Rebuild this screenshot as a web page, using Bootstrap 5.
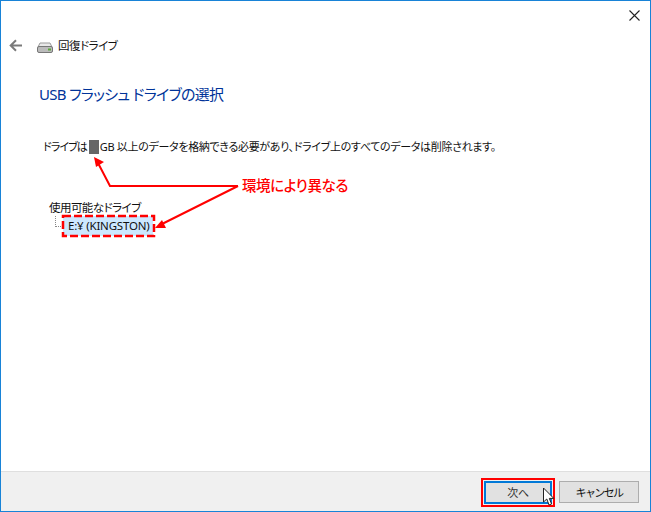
<!DOCTYPE html>
<html lang="ja">
<head>
<meta charset="utf-8">
<title>回復ドライブ</title>
<link href="https://cdn.jsdelivr.net/npm/bootstrap@5.3.0/dist/css/bootstrap.min.css" rel="stylesheet">
<style>
html,body{margin:0;height:512px;overflow:hidden;background:#fff}
body{font-family:"Noto Sans","Noto Sans CJK JP",sans-serif;font-size:12px;color:#111;line-height:16px;font-feature-settings:"palt"}
.win-frame{width:651px;height:512px;border:1px solid #1883d7;background:#fff;position:relative}
.close-row{height:29px;padding-right:10px}
.head-row{height:30px;padding-left:8px}
.back-ico{width:13px;height:13px;margin-right:15px}
.drive-ico{width:16px;height:11px;margin-top:5px;margin-right:5px}
.head-title{font-size:11.5px;letter-spacing:-.5px;padding-top:2px}
.page-title{font-size:15px;line-height:22px;color:#003399;margin:23px 0 0 38px;font-weight:400;letter-spacing:-.7px}
.desc-line{margin:34px 0 0 42px;font-size:11px;letter-spacing:-.32px;line-height:16px;white-space:nowrap}
.desc-lead{letter-spacing:-.95px}
.redact{display:inline-block;width:10px;height:14px;background:#666;vertical-align:top;margin:1px 1px 0 2px}
.tree-label{margin:45px 0 0 48px;font-size:11.5px;letter-spacing:-.55px;line-height:15px}
.tree-row{margin-left:54px;height:20px;margin-top:1px}
.tree-dots{width:8px;height:11px;border-left:1px dotted #888;border-bottom:1px dotted #888}
.drive-item{width:90px;height:20px;background:#cce8ff;padding-left:5px;line-height:19px;font-size:11.5px;letter-spacing:-.2px;white-space:nowrap}
.main-area{height:440px}
.foot-bar{height:40px;background:#f0f0f0;border-top:1px solid #dfdfdf;padding-right:11px;gap:4px;padding-top:9px}
.win-btn{width:80px;height:22px;padding:0;border:1px solid #adadad;border-radius:0;background:#e1e1e1;color:#111;font-size:11px;letter-spacing:-1.6px;line-height:19px}
.win-btn-primary{border:2px solid #0078d7;width:68px;height:23px;line-height:18px;color:#333;letter-spacing:-.3px}
.btn-mark{border:2px solid #f00;padding:1px;display:flex;margin-top:-3px;height:29px;width:74px}
.ann-layer{position:absolute;left:-1px;top:-1px;width:651px;height:512px;pointer-events:none}
.ann-text{position:absolute;left:242px;top:176px;color:#f00;font-size:14.5px;font-weight:500;line-height:18px;letter-spacing:-.4px;white-space:nowrap}
.cursor-ico{position:absolute;left:542px;top:487px;width:13px;height:20px}
</style>
</head>
<body>
<div class="win-frame d-flex flex-column">
  <div class="main-area">
    <div class="close-row d-flex justify-content-end align-items-center">
      <svg width="11" height="11" viewBox="0 0 11 11"><path d="M.5.5l10 10M10.5.5l-10 10" stroke="#222" stroke-width="1.1" fill="none"/></svg>
    </div>
    <div class="head-row d-flex align-items-center">
      <svg class="back-ico" viewBox="0 0 13 13"><path d="M13 6.5H2M7 1.2L1.7 6.5 7 11.8" stroke="#7a7a7a" stroke-width="2" fill="none"/></svg>
      <svg class="drive-ico" viewBox="0 0 16 11"><path d="M3 1h10l2 4H1z" fill="#e8e8e8" stroke="#999"/><rect x=".5" y="4.5" width="15" height="6" rx="1.5" fill="#bbb" stroke="#777"/><rect x="11" y="6.5" width="3" height="2" fill="#5caa3c"/></svg>
      <span class="head-title">回復ドライブ</span>
    </div>
    <h1 class="page-title">USB フラッシュ ドライブの選択</h1>
    <p class="desc-line mb-0"><span class="desc-lead">ドライブは</span><span class="redact"></span>GB 以上のデータを格納できる必要があり、ドライブ上のすべてのデータは削除されます。</p>
    <div class="tree-label">使用可能なドライブ</div>
    <div class="tree-row d-flex">
      <div class="tree-dots"></div>
      <div class="drive-item">E:¥ (KINGSTON)</div>
    </div>
  </div>
  <div class="foot-bar d-flex justify-content-end mt-auto">
    <div class="btn-mark"><button type="button" class="btn win-btn win-btn-primary">次へ</button></div>
    <button type="button" class="btn win-btn">キャンセル</button>
  </div>
  <div class="ann-layer">
    <svg width="651" height="512" viewBox="0 0 651 512">
      <rect x="63" y="216" width="91" height="20" fill="none" stroke="#f00" stroke-width="2.5" stroke-dasharray="8 3"/>
      <path d="M238 186H110L98 163" stroke="#f00" stroke-width="2" fill="none"/>
      <path d="M94 157l10 5-8 5z" fill="#f00"/>
      <path d="M238 186L160 225" stroke="#f00" stroke-width="2" fill="none"/>
      <path d="M155 228l7-8 4 8z" fill="#f00"/>
    </svg>
    <span class="ann-text">環境により異なる</span>
    <svg class="cursor-ico" viewBox="0 0 13 20"><path d="M1.5 1v14l3.3-3 2.2 6 2.6-1-2.3-5.6h4.5z" fill="#fff" stroke="#222"/></svg>
  </div>
</div>
</body>
</html>
